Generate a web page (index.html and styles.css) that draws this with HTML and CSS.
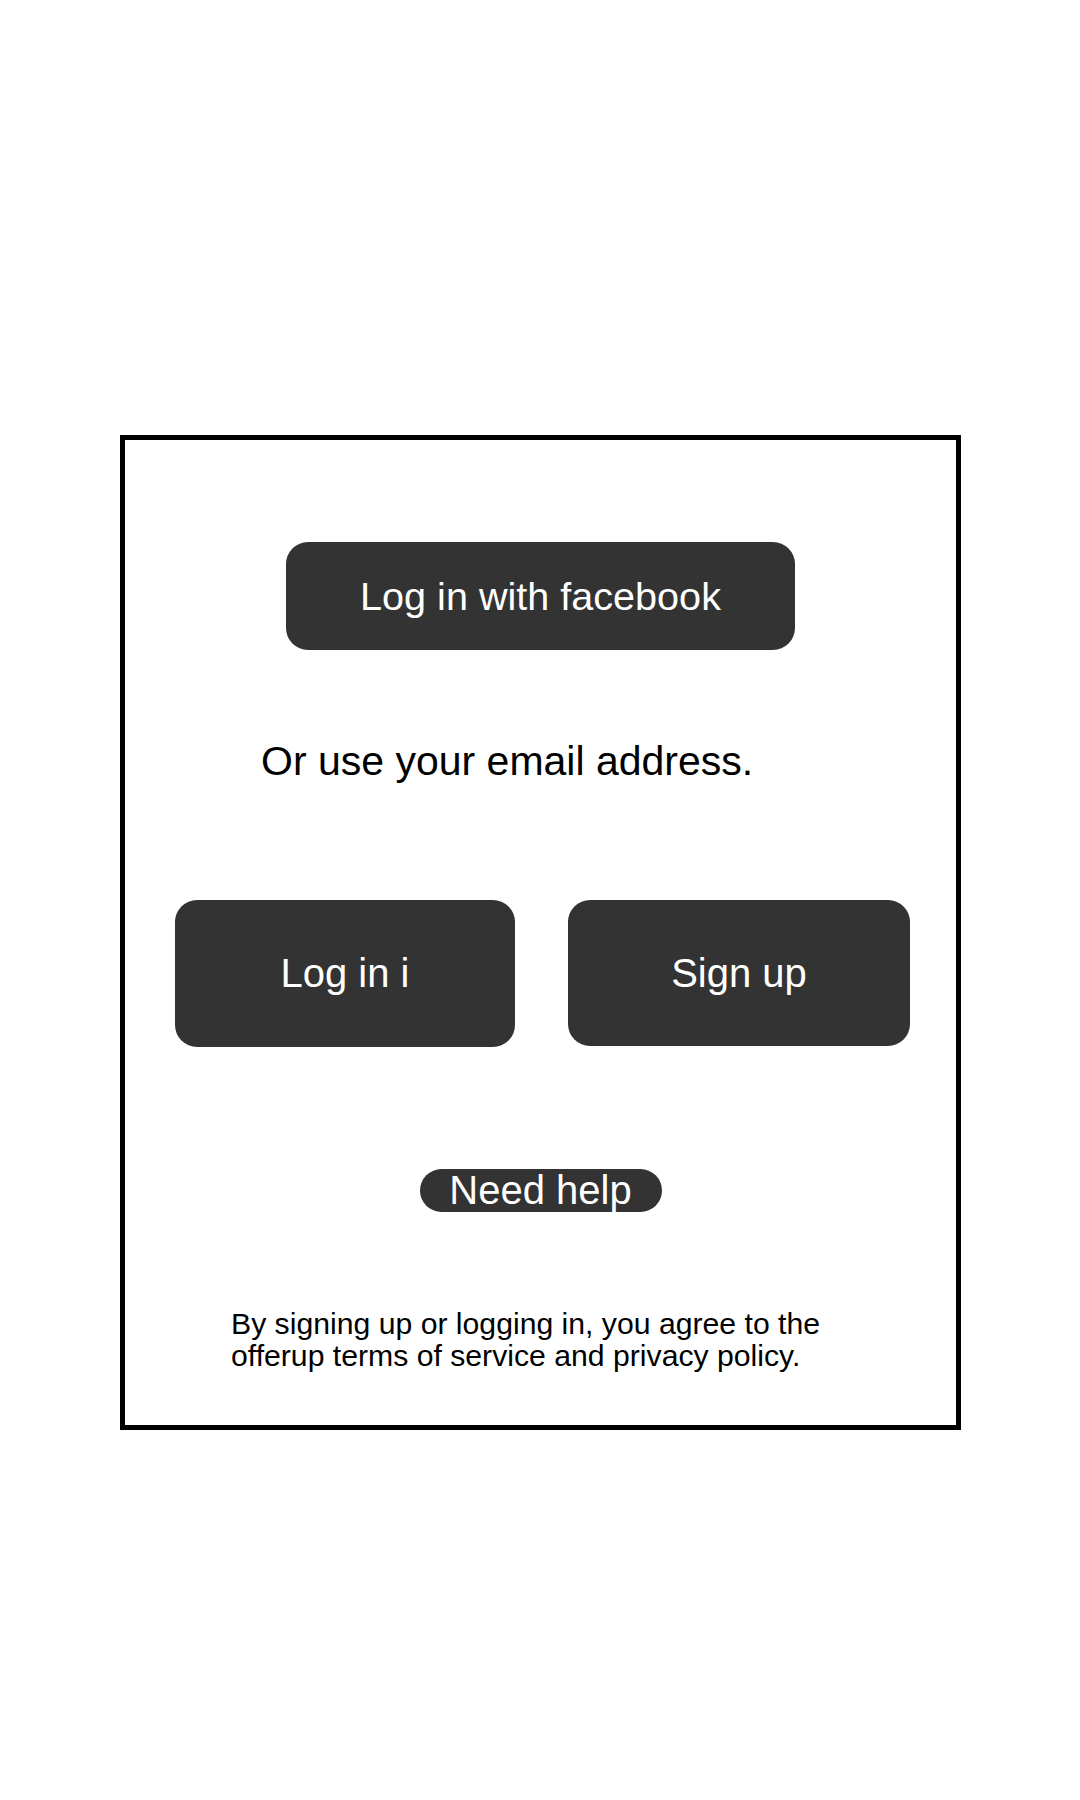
FILE: index.html
```html
<!DOCTYPE html>
<html lang="en">
<head>
<meta charset="utf-8">
<title>Log in</title>
<link rel="stylesheet" href="styles.css">
</head>
<body>
<div class="card">
  <button class="btn btn-fb">Log in with facebook</button>
  <p class="or">Or use your email address.</p>
  <div class="pair">
    <button class="btn btn-half btn-login">Log in i</button>
    <button class="btn btn-half btn-signup">Sign up</button>
  </div>
  <button class="btn btn-help">Need help</button>
  <p class="terms">By signing up or logging in, you agree to the<br>offerup terms of service and privacy policy.</p>
</div>
</body>
</html>
```

FILE: styles.css
```css
html, body {
  margin: 0;
  padding: 0;
  background: #ffffff;
}
body {
  font-family: "Liberation Sans", Arial, sans-serif;
  color: #000;
  padding-top: 435px;
  padding-left: 120px;
}
.card {
  box-sizing: border-box;
  width: 841px;
  height: 995px;
  border: 5px solid #000;
  display: flex;
  flex-direction: column;
  align-items: stretch;
}
.btn {
  font-family: "Liberation Sans", Arial, sans-serif;
  background: #333333;
  color: #ffffff;
  border: none;
  margin: 0;
  padding: 0;
  font-size: 40px;
  display: flex;
  align-items: center;
  justify-content: center;
}
.btn-fb {
  align-self: center;
  margin-top: 102px;
  width: 509px;
  height: 108px;
  border-radius: 22px;
  font-size: 39.6px;
}
.or {
  margin: 88px 0 0 136px;
  font-size: 41px;
  line-height: 46px;
}
.pair {
  display: flex;
  margin: 116px 0 0 50px;
  gap: 53px;
}
.btn-half {
  height: 147px;
  border-radius: 22px;
}
.btn-login { width: 340px; }
.btn-signup { width: 342px; height: 146px; }
.btn-help {
  align-self: center;
  margin-top: 122px;
  width: 242px;
  height: 43px;
  border-radius: 22px;
  line-height: 43px;
}
.terms {
  margin: 96px 0 0 106px;
  font-size: 30.2px;
  line-height: 32px;
}
```
